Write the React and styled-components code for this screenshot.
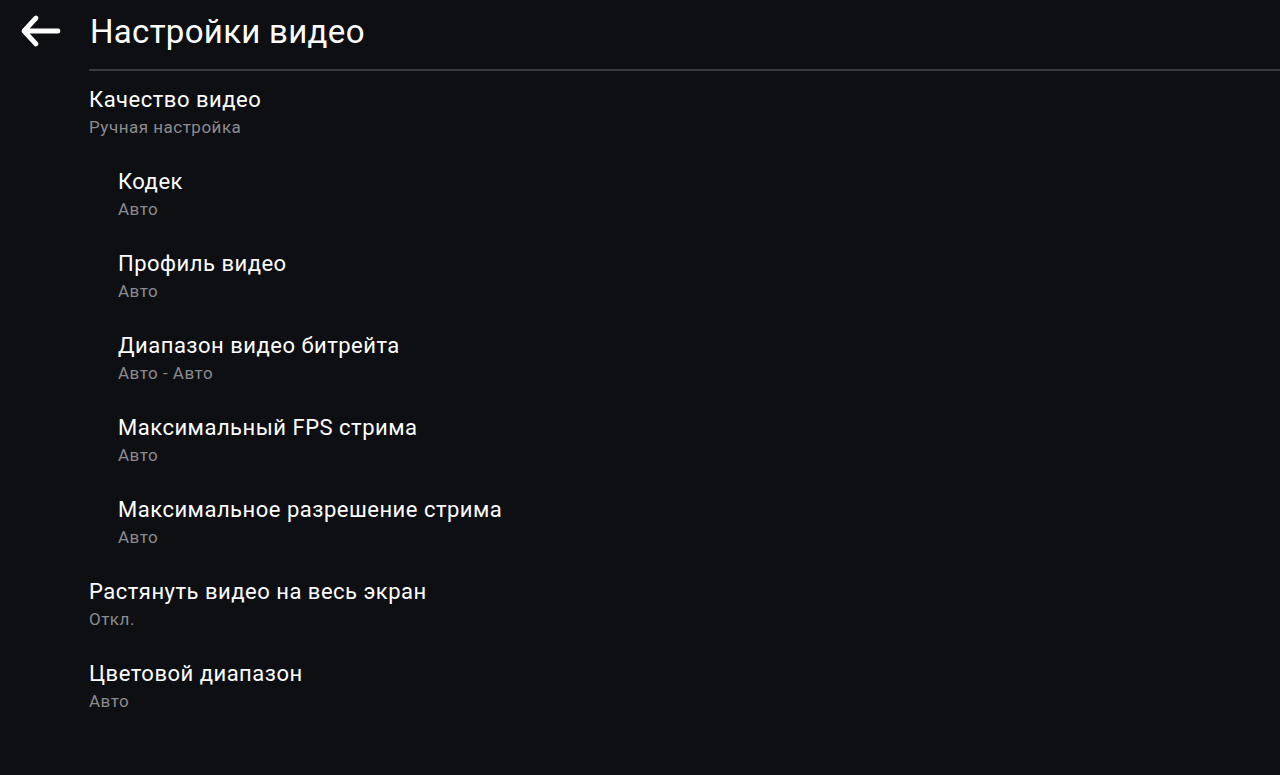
import React from "react";
import styled, { createGlobalStyle } from "styled-components";

const GlobalStyle = createGlobalStyle`
  html, body {
    margin: 0;
    padding: 0;
    background: #0e0f13;
  }
  body {
    font-family: Roboto, "Noto Sans", sans-serif;
    color: #ffffff;
  }
`;

const items = [
  { title: "Качество видео", value: "Ручная настройка" },
  { title: "Кодек", value: "Авто", nested: true },
  { title: "Профиль видео", value: "Авто", nested: true },
  { title: "Диапазон видео битрейта", value: "Авто - Авто", nested: true },
  { title: "Максимальный FPS стрима", value: "Авто", nested: true },
  { title: "Максимальное разрешение стрима", value: "Авто", nested: true },
  { title: "Растянуть видео на весь экран", value: "Откл." },
  { title: "Цветовой диапазон", value: "Авто" },
];

export default function App() {
  return (
    <>
      <GlobalStyle />
      <Screen>
        <Header>
          <BackButton aria-label="Назад">
            <svg width="46" height="40" viewBox="0 0 46 40">
              <path
                d="M40 19H6M18 6L6 19l12 13"
                fill="none"
                stroke="#ffffff"
                strokeWidth="4.8"
                strokeLinecap="round"
                strokeLinejoin="round"
              />
            </svg>
          </BackButton>
          <Title>Настройки видео</Title>
        </Header>
        <List>
          {items.map((it) => (
            <Item key={it.title} $nested={it.nested}>
              <ItemTitle>{it.title}</ItemTitle>
              <ItemValue>{it.value}</ItemValue>
            </Item>
          ))}
        </List>
      </Screen>
    </>
  );
}

const Screen = styled.div`
  width: 1280px;
  height: 775px;
  background: #0e0f13;
  overflow: hidden;
`;

const Header = styled.div`
  height: 64px;
  display: flex;
  align-items: center;
  padding-left: 18px;
`;

const BackButton = styled.div`
  width: 46px;
  height: 40px;
  display: flex;
  margin-right: 26px;
`;

const Title = styled.h1`
  margin: 0;
  font-size: 33px;
  font-weight: 400;
  letter-spacing: 0.3px;
  line-height: 40px;
  color: #ffffff;
`;

const List = styled.div`
  margin-left: 89px;
  border-top: 2px solid #3a3b40;
  margin-top: 5px;
  padding-top: 1px;
`;

const Item = styled.div`
  padding: 14px 0 13px ${(p) => (p.$nested ? "29px" : "0")};
  display: flex;
  flex-direction: column;
`;

const ItemTitle = styled.div`
  font-size: 22px;
  letter-spacing: 0.5px;
  line-height: 28px;
  color: #ffffff;
`;

const ItemValue = styled.div`
  font-size: 17px;
  letter-spacing: 0.5px;
  line-height: 27px;
  color: #8b8b8f;
`;
